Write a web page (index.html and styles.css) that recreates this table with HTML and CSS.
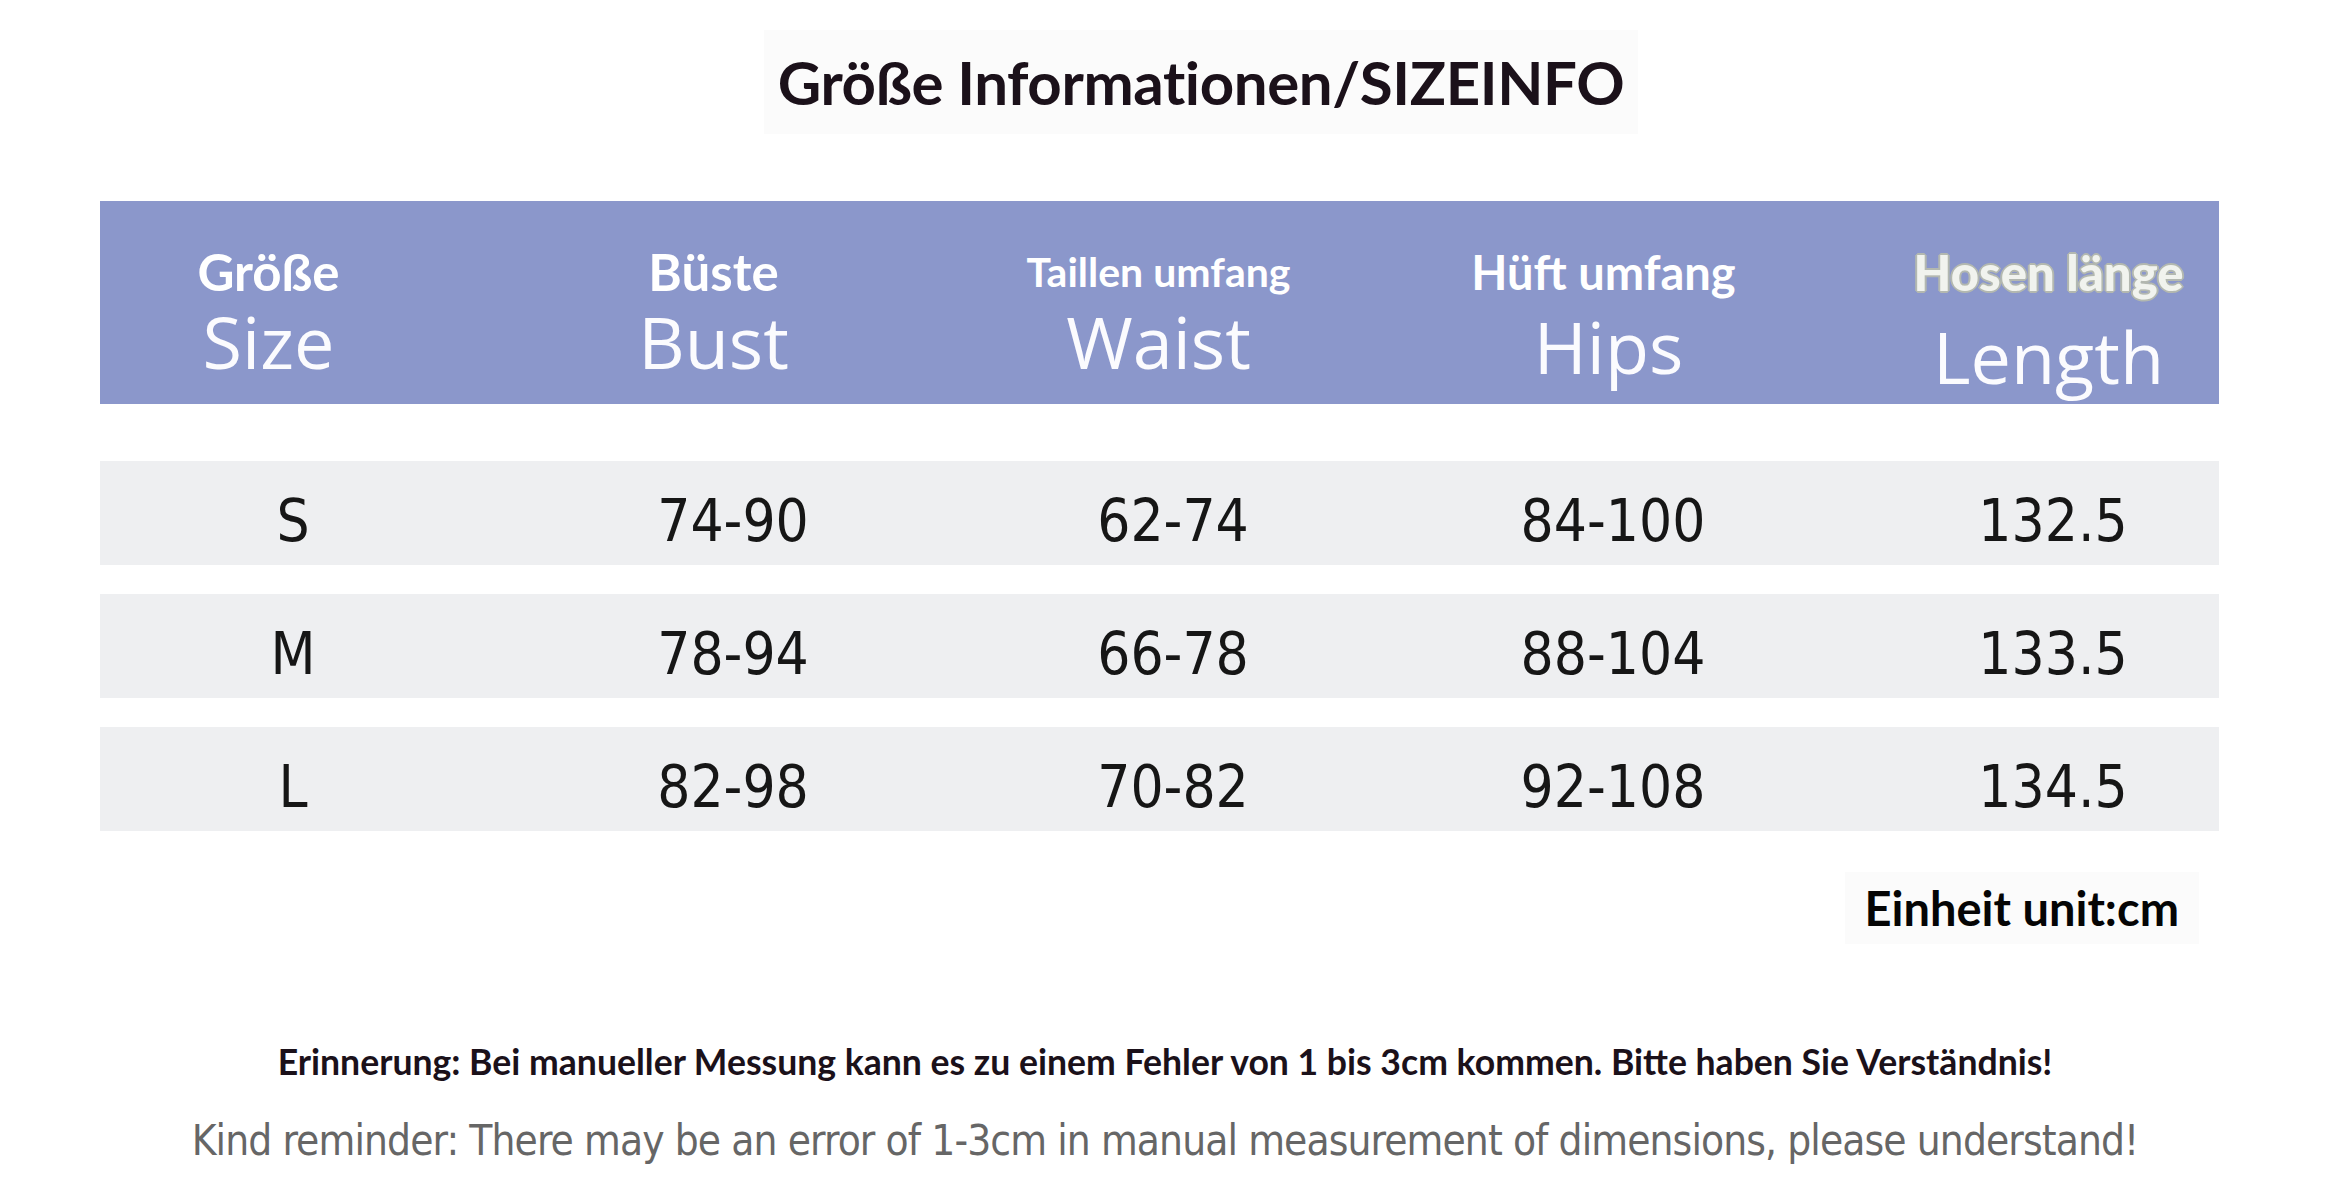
FILE: index.html
```html
<!DOCTYPE html>
<html lang="de">
<head>
<meta charset="utf-8">
<title>Größe Informationen/SIZEINFO</title>
<link rel="stylesheet" href="styles.css">
</head>
<body>
<div class="page">
  <header class="title-wrap">
    <h1 class="title">Größe Informationen/SIZEINFO</h1>
  </header>

  <section class="chart">
    <div class="head">
      <div class="head-grid">
        <div class="hcell"><span class="de">Größe</span><span class="en">Size</span></div>
        <div class="hcell"><span class="de">Büste</span><span class="en">Bust</span></div>
        <div class="hcell"><span class="de de-small">Taillen umfang</span><span class="en">Waist</span></div>
        <div class="hcell"><span class="de de-mid">Hüft umfang</span><span class="en en-low">Hips</span></div>
        <div class="hcell"><span class="de de-outline">Hosen länge</span><span class="en en-lower">Length</span></div>
      </div>
    </div>

    <div class="rows">
      <div class="row">
        <div class="cells">
          <div class="cell">S</div><div class="cell">74-90</div><div class="cell">62-74</div><div class="cell">84-100</div><div class="cell">132.5</div>
        </div>
      </div>
      <div class="row">
        <div class="cells">
          <div class="cell">M</div><div class="cell">78-94</div><div class="cell">66-78</div><div class="cell">88-104</div><div class="cell">133.5</div>
        </div>
      </div>
      <div class="row">
        <div class="cells">
          <div class="cell">L</div><div class="cell">82-98</div><div class="cell">70-82</div><div class="cell">92-108</div><div class="cell">134.5</div>
        </div>
      </div>
    </div>

    <div class="unit-wrap">
      <p class="unit">Einheit unit:cm</p>
    </div>
  </section>

  <footer class="notes">
    <p class="note-de">Erinnerung: Bei manueller Messung kann es zu einem Fehler von 1 bis 3cm kommen. Bitte haben Sie Verständnis!</p>
    <p class="note-en">Kind reminder: There may be an error of 1-3cm in manual measurement of dimensions, please understand!</p>
  </footer>
</div>
</body>
</html>
```

FILE: styles.css
```css
html, body {
  margin: 0;
  padding: 0;
  background: #ffffff;
}

.page {
  width: 2330px;
  height: 1200px;
  overflow: hidden;
  display: flex;
  flex-direction: column;
  font-family: "Lato", "Liberation Sans", sans-serif;
}

/* Title */
.title-wrap {
  display: flex;
  justify-content: center;
  padding-top: 30px;
  padding-left: 72px;
}

.title {
  margin: 0;
  padding: 12px 14px;
  background: #fbfbfb;
  font-family: "Lato", "Liberation Sans", sans-serif;
  font-weight: 700;
  font-size: 60px;
  line-height: 80px;
  color: #1b111a;
  letter-spacing: -0.4px;
}

/* Chart */
.chart {
  margin: 67px 111px 0 100px;
  display: flex;
  flex-direction: column;
}

.head {
  height: 203px;
  background: #8b97cb;
  display: flex;
}

.head-grid {
  display: grid;
  grid-template-columns: repeat(5, 445px);
  margin-left: -54px;
}

.hcell {
  display: flex;
  flex-direction: column;
  align-items: center;
  color: #ffffff;
  padding-top: 46px;
}

.de {
  font-family: "Lato", "Liberation Sans", sans-serif;
  font-weight: 700;
  font-size: 51px;
  line-height: 50px;
  color: #ffffff;
}

.de-small {
  font-size: 41px;
}

.de-mid {
  font-size: 47px;
}

.de-outline {
  font-size: 49px;
  font-weight: 900;
  color: #f1f3ee;
  text-shadow:
    1px 1px 0 #b3b8b0, -1px -1px 0 #b3b8b0,
    1px -1px 0 #b3b8b0, -1px 1px 0 #b3b8b0,
    2px 0 0 #b3b8b0, -2px 0 0 #b3b8b0,
    0 2px 0 #b3b8b0, 0 -2px 0 #b3b8b0;
}

.en {
  font-family: "Open Sans", "Noto Sans", sans-serif;
  font-weight: 400;
  font-size: 72px;
  line-height: 88px;
  color: #fbfbfe;
  margin-top: 0;
}

.en-low {
  margin-top: 5px;
  transform: translateX(5px);
}

.en-lower {
  margin-top: 15px;
}

/* Rows */
.rows {
  margin-top: 57px;
  display: flex;
  flex-direction: column;
  gap: 29px;
}

.row {
  height: 104px;
  background: #eeeff1;
  display: flex;
  align-items: center;
}

.cells {
  display: grid;
  grid-template-columns: repeat(5, 440px);
  margin-left: -27px;
  padding-top: 16px;
}

.cell {
  text-align: center;
  font-family: "DejaVu Sans Condensed", "Liberation Sans", sans-serif;
  font-size: 58px;
  line-height: 70px;
  color: #161616;
}

/* Unit */
.unit-wrap {
  display: flex;
  justify-content: flex-end;
  padding-right: 20px;
  margin-top: 41px;
}

.unit {
  margin: 0;
  padding: 8px 20px;
  background: #fbfbfb;
  font-family: "Lato", "Liberation Sans", sans-serif;
  font-weight: 700;
  font-size: 47px;
  line-height: 56px;
  color: #050505;
}

/* Notes */
.notes {
  margin-top: 94px;
  display: flex;
  flex-direction: column;
  align-items: center;
}

.note-de {
  margin: 0;
  font-family: "Lato", "Liberation Sans", sans-serif;
  font-weight: 700;
  font-size: 35.6px;
  line-height: 48px;
  color: #1b111a;
}

.note-en {
  margin: 27px 0 0;
  font-family: "DejaVu Sans Condensed", "Liberation Sans", sans-serif;
  font-size: 42px;
  line-height: 56px;
  letter-spacing: -0.9px;
  color: #666666;
}
```
